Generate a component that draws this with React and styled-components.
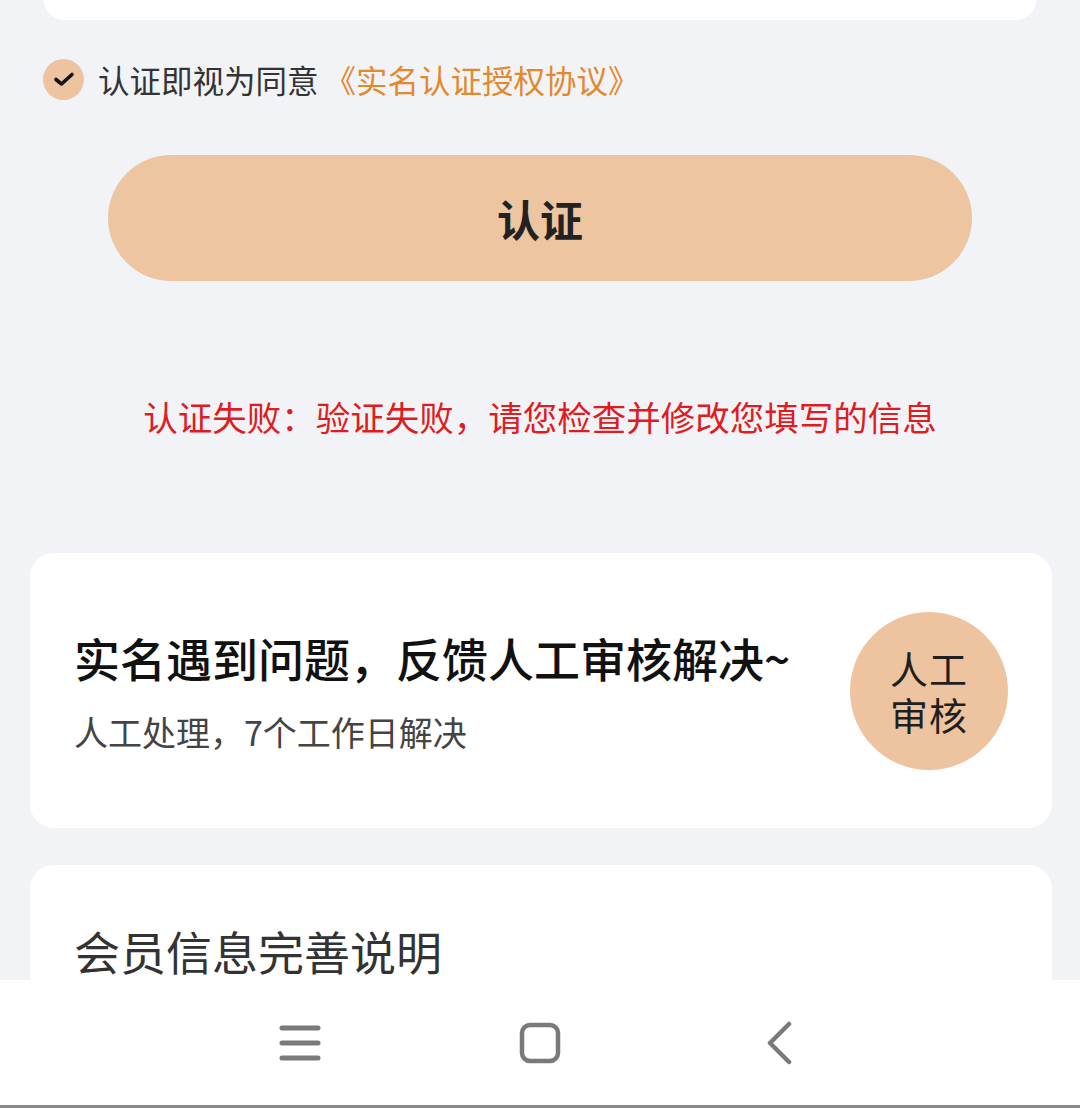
import React from "react";
import styled, { createGlobalStyle } from "styled-components";

const GlobalStyle = createGlobalStyle`
  * {
    box-sizing: border-box;
  }
  body {
    margin: 0;
    background: #f2f3f7;
    font-family: "Noto Sans CJK SC", "Noto Sans", sans-serif;
  }
`;

const Page = styled.div`
  height: 1108px;
  display: flex;
  flex-direction: column;
  overflow: hidden;
`;

const Content = styled.div`
  flex: 1;
  overflow: hidden;
  display: flex;
  flex-direction: column;
`;

const TopCardStub = styled.div`
  height: 20px;
  margin: 0 44px;
  background: #ffffff;
  border-radius: 0 0 24px 24px;
  flex-shrink: 0;
`;

const AgreeRow = styled.label`
  margin-top: 37px;
  padding-left: 43px;
  height: 44px;
  display: flex;
  align-items: center;
  gap: 14px;
  font-size: 31.5px;
  color: #333333;
  flex-shrink: 0;
`;

const CheckCircle = styled.span`
  width: 41px;
  height: 41px;
  border-radius: 50%;
  background: #edc49f;
  display: flex;
  align-items: center;
  justify-content: center;
`;

const AgreeLink = styled.span`
  color: #e2892c;
  margin-left: 6px;
`;

const SubmitButton = styled.button`
  margin: 54px 108px 0;
  height: 126px;
  border: none;
  border-radius: 63px;
  background: #edc5a0;
  color: #222222;
  font-family: inherit;
  font-size: 43px;
  font-weight: 700;
  flex-shrink: 0;
`;

const ErrorText = styled.p`
  margin: 110px 0 0;
  text-align: center;
  line-height: 50px;
  font-size: 34.5px;
  color: #df1c1f;
  flex-shrink: 0;
`;

const Card = styled.div`
  margin: ${(p) => p.$top}px 28px 0 30px;
  background: #ffffff;
  border-radius: 24px;
  flex-shrink: 0;
`;

const FeedbackCard = styled(Card)`
  height: 275px;
  padding: 0 44px;
  display: flex;
  align-items: center;
  justify-content: space-between;
`;

const CardText = styled.div`
  display: flex;
  flex-direction: column;
`;

const CardTitle = styled.div`
  font-size: 46px;
  line-height: 60px;
  font-weight: 500;
  color: #111111;
`;

const CardSub = styled.div`
  margin-top: 22px;
  font-size: 34px;
  line-height: 46px;
  color: #444444;
`;

const Badge = styled.div`
  width: 158px;
  height: 158px;
  border-radius: 50%;
  background: #edc49f;
  color: #1f1f1f;
  display: flex;
  flex-direction: column;
  align-items: center;
  justify-content: center;
  font-size: 38px;
  letter-spacing: 1px;
`;

const BadgeLine = styled.span`
  display: block;
  line-height: 46px;
`;

const InfoCard = styled(Card)`
  flex: 1;
  border-radius: 24px 24px 0 0;
  padding: 57px 44px 0;
`;

const InfoTitle = styled.div`
  font-size: 46px;
  line-height: 56px;
  color: #333333;
`;

const NavBar = styled.nav`
  height: 128px;
  flex-shrink: 0;
  background: #ffffff;
  border-bottom: 3px solid #8a8a8a;
  display: flex;
  align-items: center;
  justify-content: center;
  gap: 160px;
`;

const NavButton = styled.span`
  width: 80px;
  height: 60px;
  display: flex;
  align-items: center;
  justify-content: center;
  color: #7a7a7a;
`;

export default function App() {
  return (
    <>
      <GlobalStyle />
      <Page>
        <Content>
          <TopCardStub />
          <AgreeRow>
            <CheckCircle>
              <svg width="22" height="16" viewBox="0 0 22 16" fill="none">
                <path
                  d="M3 8.5L8.5 13L19 3.5"
                  stroke="#111"
                  strokeWidth="3.6"
                  strokeLinecap="round"
                  strokeLinejoin="round"
                />
              </svg>
            </CheckCircle>
            <span>
              认证即视为同意
              <AgreeLink>《实名认证授权协议》</AgreeLink>
            </span>
          </AgreeRow>
          <SubmitButton>认证</SubmitButton>
          <ErrorText>认证失败：验证失败，请您检查并修改您填写的信息</ErrorText>
          <FeedbackCard $top={112}>
            <CardText>
              <CardTitle>实名遇到问题，反馈人工审核解决~</CardTitle>
              <CardSub>人工处理，7个工作日解决</CardSub>
            </CardText>
            <Badge>
              <BadgeLine>人工</BadgeLine>
              <BadgeLine>审核</BadgeLine>
            </Badge>
          </FeedbackCard>
          <InfoCard $top={37}>
            <InfoTitle>会员信息完善说明</InfoTitle>
          </InfoCard>
        </Content>
        <NavBar>
          <NavButton>
            <svg width="42" height="40" viewBox="0 0 42 40" fill="none">
              <path
                d="M3 5H39M3 20H39M3 35H39"
                stroke="currentColor"
                strokeWidth="5"
                strokeLinecap="round"
              />
            </svg>
          </NavButton>
          <NavButton>
            <svg width="42" height="42" viewBox="0 0 42 42" fill="none">
              <rect
                x="3"
                y="3"
                width="36"
                height="36"
                rx="8"
                stroke="currentColor"
                strokeWidth="4.5"
              />
            </svg>
          </NavButton>
          <NavButton>
            <svg width="32" height="44" viewBox="0 0 32 44" fill="none">
              <path
                d="M25 3L6 22L25 41"
                stroke="currentColor"
                strokeWidth="4.5"
                strokeLinecap="round"
                strokeLinejoin="round"
              />
            </svg>
          </NavButton>
        </NavBar>
      </Page>
    </>
  );
}
